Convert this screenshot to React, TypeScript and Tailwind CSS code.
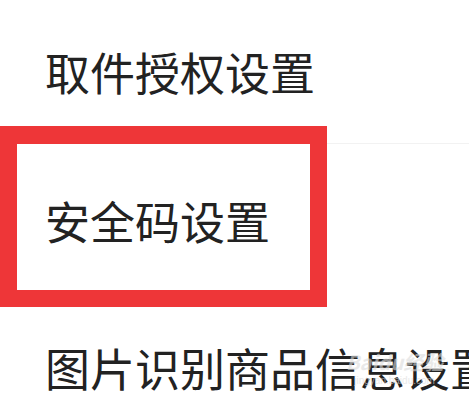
import React from "react";

export default function App() {
  const font = { fontFamily: '"Noto Sans CJK SC", "Noto Sans", sans-serif' };
  return (
    <div className="relative w-[469px] h-[405px] overflow-hidden bg-white" style={font}>
      <div className="flex flex-col">
        <div className="h-[144px] flex items-center pl-[45px] border-b border-[#f2f2f2]">
          <span className="text-[45px] leading-none text-[#222222] whitespace-nowrap">取件授权设置</span>
        </div>
        <div className="h-[152px] flex items-center pl-[45px]">
          <span className="text-[45px] leading-none text-[#222222] whitespace-nowrap">安全码设置</span>
        </div>
        <div className="h-[142px] flex items-center pl-[45px]">
          <span className="text-[45px] leading-none text-[#222222] whitespace-nowrap">图片识别商品信息设置</span>
        </div>
      </div>
      <div className="absolute left-0 top-[126px] w-[327px] h-[181px] border-[17px] border-t-[18px] border-[#ee3638]" />
      <div className="absolute left-[346px] top-[352px] flex flex-col items-center text-[#dcdcdc] opacity-60 pointer-events-none">
        <span className="text-[20px] leading-none font-bold italic">Baidu经验</span>
        <span className="text-[10px] leading-none mt-[4px]" style={{ fontFamily: '"Liberation Sans", sans-serif' }}>jingyan.baidu.com</span>
      </div>
    </div>
  );
}
